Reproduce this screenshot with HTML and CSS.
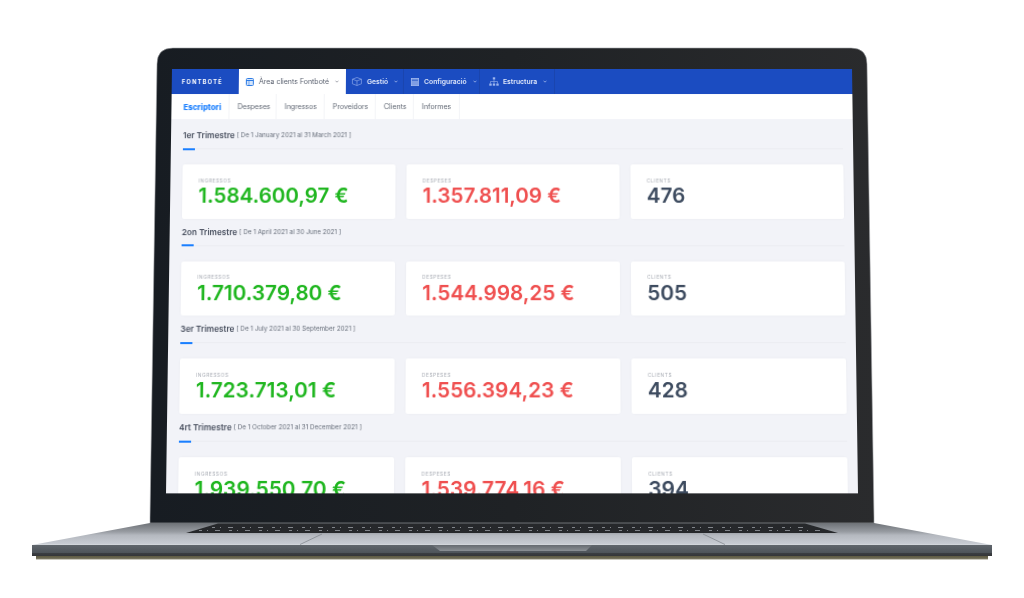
FILE: index.html
```html
<!DOCTYPE html>
<html lang="ca">
<head>
<meta charset="utf-8">
<title>Fontboté</title>
<link rel="stylesheet" href="styles.css">
</head>
<body>
<main class="laptop">
  <svg class="device" width="1024" height="598" viewBox="0 0 1024 598" aria-hidden="true">
    <defs>
      <linearGradient id="wing" x1="0" y1="0" x2="0" y2="1"><stop offset="0" stop-color="#6d7176"/><stop offset="0.4" stop-color="#989ca2"/><stop offset="0.55" stop-color="#b4b8bf"/><stop offset="0.95" stop-color="#c8ccd3"/><stop offset="1" stop-color="#dadde1"/></linearGradient>
      <linearGradient id="front" x1="0" y1="0" x2="0" y2="1"><stop offset="0" stop-color="#60666c"/><stop offset="0.7" stop-color="#4e545a"/><stop offset="0.76" stop-color="#3a3d41"/><stop offset="1" stop-color="#343639"/></linearGradient>
      <linearGradient id="lip" x1="0" y1="0" x2="0" y2="1"><stop offset="0" stop-color="#5e5a42"/><stop offset="0.6" stop-color="#6d6a55"/><stop offset="1" stop-color="#f4f3ee"/></linearGradient>
      <linearGradient id="lid" x1="0" y1="0" x2="1" y2="0"><stop offset="0" stop-color="#171c22"/><stop offset="0.5" stop-color="#1f2225"/><stop offset="1" stop-color="#2a2b2d"/></linearGradient>
      <linearGradient id="notch" x1="0" y1="0" x2="0" y2="1"><stop offset="0" stop-color="#666b71"/><stop offset="1" stop-color="#8a8f94"/></linearGradient>
    </defs>
    <path d="M157 64 Q157 48 173 48 H851 Q867 48 867 64 L874 518 V523 H150 V518 Z" fill="url(#lid)" stroke="#a3a5a8" stroke-width="0.6"/>
    <path d="M150 523 L32 545 H992 L874 523 Z" fill="url(#wing)"/>
    <path d="M218 523.500 L186 533 H838 L805 523.500 Z" fill="#26282b"/>
    <path d="M212 527.500 H812 M199 530.500 H826" stroke="#8b9096" stroke-width="0.9" stroke-dasharray="3 5 1 7 5 9" fill="none"/>
    <path d="M300 544.500 L322 534 M703 534 L725 544.500" stroke="#7d8288" stroke-width="0.7" fill="none"/>
    <rect x="32" y="545" width="960" height="11" fill="url(#front)"/>
    <path d="M432 545 H592 L586 551 H440 Z" fill="url(#notch)"/>
    <rect x="36" y="556" width="952" height="4" fill="url(#lip)"/>
  </svg>

  <div class="screen">
    <header class="topbar">
      <div class="logo">FONTBOTÉ</div>
      <div class="tab tab-active">
        <svg class="icon" width="8" height="8" viewBox="0 0 8 8"><rect x="0.500" y="0.500" width="7" height="7" rx="1" fill="#d6e6fb" stroke="#2c7be5"/><path d="M0.500 2.500 H7.500" stroke="#2c7be5"/><path d="M3 2.500 V7.500" stroke="#2c7be5" stroke-width="0.6"/></svg>
        <span>Àrea clients Fontboté</span>
        <svg class="chev" width="4" height="3" viewBox="0 0 4 3"><path d="M0.500 0.700 L2 2.200 L3.500 0.700" fill="none" stroke="currentColor" stroke-width="0.7"/></svg>
      </div>
      <div class="tab tab-gestio">
        <svg class="icon" width="10" height="9" viewBox="0 0 10 9"><path d="M5 0.500 L9.500 2.200 V6.800 L5 8.500 L0.500 6.800 V2.200 Z M0.500 2.200 L5 3.900 L9.500 2.200 M5 3.900 V8.500" fill="none" stroke="#9db6ee" stroke-width="0.6"/></svg>
        <span>Gestió</span>
        <svg class="chev" width="4" height="3" viewBox="0 0 4 3"><path d="M0.500 0.700 L2 2.200 L3.500 0.700" fill="none" stroke="currentColor" stroke-width="0.7"/></svg>
      </div>
      <div class="tab tab-config">
        <svg class="icon" width="8" height="8" viewBox="0 0 8 8"><rect x="0.300" y="0.300" width="7.400" height="7.400" fill="#7f9de3" stroke="#b3c6f2" stroke-width="0.6"/><path d="M1 2.200 H7" stroke="#1b4cc1" stroke-width="0.8"/></svg>
        <span>Configuració</span>
        <svg class="chev" width="4" height="3" viewBox="0 0 4 3"><path d="M0.500 0.700 L2 2.200 L3.500 0.700" fill="none" stroke="currentColor" stroke-width="0.7"/></svg>
      </div>
      <div class="tab tab-struct">
        <svg class="icon" width="10" height="9" viewBox="0 0 10 9"><path d="M5 2.500 V4.500 M1.500 6.500 V4.500 H8.500 V6.500 M5 4.500 V6.500" fill="none" stroke="#9db6ee" stroke-width="0.6"/><rect x="3.800" y="0.300" width="2.400" height="2.200" fill="#9db6ee"/><rect x="0.300" y="6.500" width="2.400" height="2.200" fill="#9db6ee"/><rect x="3.800" y="6.500" width="2.400" height="2.200" fill="#9db6ee"/><rect x="7.300" y="6.500" width="2.400" height="2.200" fill="#9db6ee"/></svg>
        <span>Estructura</span>
        <svg class="chev" width="4" height="3" viewBox="0 0 4 3"><path d="M0.500 0.700 L2 2.200 L3.500 0.700" fill="none" stroke="currentColor" stroke-width="0.7"/></svg>
      </div>
    </header>

    <nav class="subnav">
      <a class="sub sub-active">Escriptori</a>
      <a class="sub">Despeses</a>
      <a class="sub">Ingressos</a>
      <a class="sub">Proveidors</a>
      <a class="sub">Clients</a>
      <a class="sub">Informes</a>
    </nav>

    <div class="content">
      <section class="quarter">
        <h2 class="q-title"><strong>1er Trimestre</strong> <span>[ De 1 January 2021 al 31 March 2021 ]</span></h2>
        <div class="rule"></div>
        <div class="cards">
          <div class="card"><div class="label">INGRESSOS</div><div class="value green">1.584.600,97 €</div></div>
          <div class="card"><div class="label">DESPESES</div><div class="value red">1.357.811,09 €</div></div>
          <div class="card"><div class="label">CLIENTS</div><div class="value slate">476</div></div>
        </div>
      </section>
      <section class="quarter">
        <h2 class="q-title"><strong>2on Trimestre</strong> <span>[ De 1 April 2021 al 30 June 2021 ]</span></h2>
        <div class="rule"></div>
        <div class="cards">
          <div class="card"><div class="label">INGRESSOS</div><div class="value green">1.710.379,80 €</div></div>
          <div class="card"><div class="label">DESPESES</div><div class="value red">1.544.998,25 €</div></div>
          <div class="card"><div class="label">CLIENTS</div><div class="value slate">505</div></div>
        </div>
      </section>
      <section class="quarter">
        <h2 class="q-title"><strong>3er Trimestre</strong> <span>[ De 1 July 2021 al 30 September 2021 ]</span></h2>
        <div class="rule"></div>
        <div class="cards">
          <div class="card"><div class="label">INGRESSOS</div><div class="value green">1.723.713,01 €</div></div>
          <div class="card"><div class="label">DESPESES</div><div class="value red">1.556.394,23 €</div></div>
          <div class="card"><div class="label">CLIENTS</div><div class="value slate">428</div></div>
        </div>
      </section>
      <section class="quarter">
        <h2 class="q-title"><strong>4rt Trimestre</strong> <span>[ De 1 October 2021 al 31 December 2021 ]</span></h2>
        <div class="rule"></div>
        <div class="cards">
          <div class="card"><div class="label">INGRESSOS</div><div class="value green">1.939.550,70 €</div></div>
          <div class="card"><div class="label">DESPESES</div><div class="value red">1.539.774,16 €</div></div>
          <div class="card"><div class="label">CLIENTS</div><div class="value slate">394</div></div>
        </div>
      </section>
    </div>
  </div>
</main>
</body>
</html>
```

FILE: styles.css
```css
* { box-sizing: border-box; }
html, body { margin: 0; padding: 0; background: #fff; }
body { width: 1024px; height: 598px; overflow: hidden; font-family: Inter, "Liberation Sans", sans-serif; }

.laptop { position: relative; width: 1024px; height: 598px; }
.device { position: absolute; left: 0; top: 0; display: block; }

/* The screen sits on the device art; the matrix gives it the tilt of the lid. */
.screen {
  position: absolute;
  left: 172px;
  top: 69px;
  width: 680px;
  height: 417px;
  overflow: hidden;
  background: #f2f3f8;
  transform-origin: 0 0;
  transform: matrix3d(1,0,0,0, -0.014138,1,0,-0.00004158, 0,0,1,0, 0,0,0,1);
  filter: blur(0.25px);
}

.topbar { display: flex; height: 25px; background: #1b4cc1; color: #fff; font-size: 6.8px; font-weight: 500; }
.logo { width: 67px; padding-left: 10px; display: flex; align-items: center; font-size: 5.7px; font-weight: 700; letter-spacing: 1.25px; }
.tab { display: flex; align-items: center; border-right: 1px solid #1a45ae; color: #dfe7fa; }
.tab-active { width: 107px; padding-left: 7px; background: #fff; color: #5b6270; border-right: 0; font-size: 7px; font-weight: 400; }
.tab-gestio { width: 58px; padding-left: 6px; }
.tab-config { width: 76px; padding-left: 7px; }
.tab-struct { width: 75px; padding-left: 9px; }
.icon { flex: none; margin-right: 5px; }
.tab-struct .icon { margin-right: 4px; }
.tab-gestio span, .tab-config span, .tab-struct span { font-weight: 600; }
.tab span { white-space: nowrap; }
.chev { flex: none; margin-left: 6px; opacity: 0.8; }

.subnav { display: flex; height: 25px; background: #fff; font-size: 7px; color: #5f6672; }
.sub { display: flex; align-items: center; padding: 0 8px; border-right: 1px solid #f3f4f7; white-space: nowrap; }
.sub-active { padding-left: 12px; width: 58px; color: #1a7fff; font-size: 7.8px; font-weight: 800; }
.sub:nth-child(2) { width: 47px; }
.sub:nth-child(3) { width: 48px; }
.sub:nth-child(4) { width: 51px; }
.sub:nth-child(5) { width: 38px; }
.sub:nth-child(6) { width: 46px; }

.content { padding: 9px 10.5px 0 11.5px; }
.quarter { height: 95.7px; }
.q-title { margin: 0; height: 14px; display: flex; align-items: center; gap: 2px; padding-left: 0.5px; font-size: 6.3px; font-weight: 400; color: #666d79; white-space: nowrap; }
.q-title strong { font-size: 8.2px; font-weight: 600; color: #4a5160; }
.rule { position: relative; height: 1px; margin: 6px 0 15px; background: #ebecf1; }
.rule::before { content: ""; position: absolute; left: 0.5px; top: -0.5px; width: 12px; height: 2px; background: #1a7fff; }

.cards { display: grid; grid-template-columns: repeat(3, 1fr); gap: 11px; }
.card { height: 53.5px; padding: 12.5px 16px 0 16.5px; background: #fff; border-radius: 2px; box-shadow: 0 0 2px rgba(180, 185, 200, 0.15); }
.label { font-size: 4.8px; line-height: 6.5px; letter-spacing: 0.55px; color: #a9adb5; }
.value { font-size: 20.5px; line-height: 23px; font-weight: 600; white-space: nowrap; }
.green { color: #1fb61f; }
.red { color: #ef4f4f; }
.slate { color: #3d4b5f; }
```
